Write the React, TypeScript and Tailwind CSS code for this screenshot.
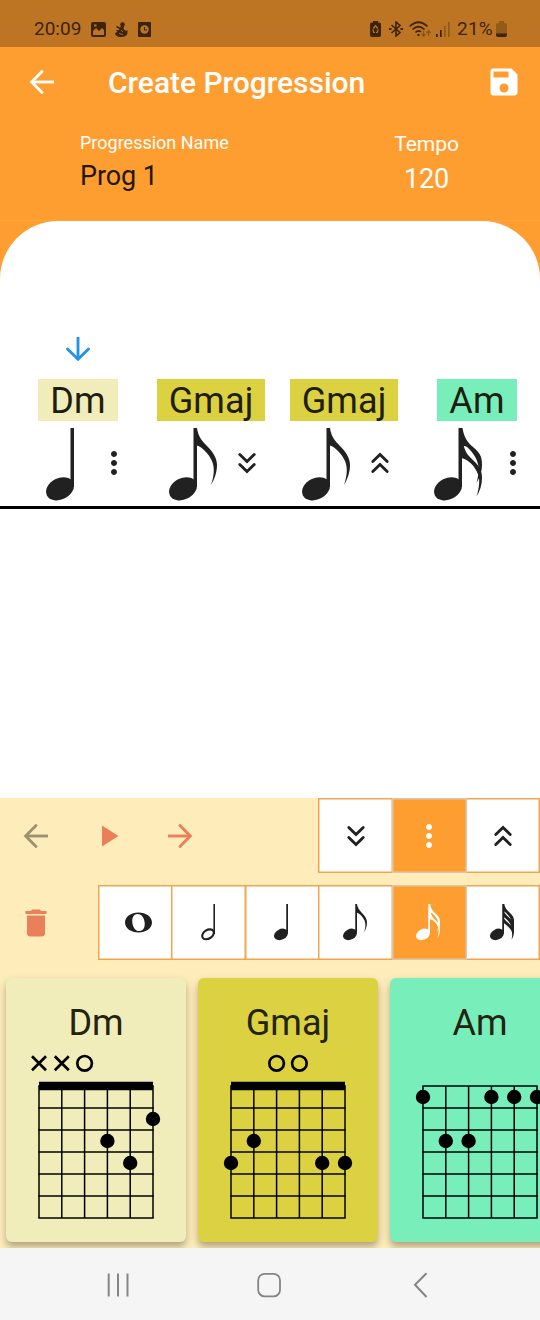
import React from "react";
import { MdDelete, MdMoreVert, MdPlayArrow, MdSave } from "react-icons/md";

type NoteKind = "whole" | "half" | "quarter" | "eighth" | "sixteenth" | "thirtySecond";
type StrumKind = "down" | "none" | "up";

const FLAG = "M28 0C29 8 33 13 38 18C44 24 48 30 48 37C48 45 45 52 42 57C45 48 46 40 43 33C40 26 33 19 28 17.5Z";
const FLAG_UPPER = "M27 0H28.5C29.5 6 31 10 34 14C37 18 41 20 44 24C47.5 28 48 32 48 37C48 43 46 49 42.5 55C44 49 45 44 44.500 39C44 33 40 26 36.500 22.500C33.500 19 32 18 30 18L27 19Z";
const FLAG_LOWER = "M27 14L29.500 17C30.500 21 32 24.500 34 27C38 31.500 41 33.500 44 37.500C47 42 48 45 48 50C48 57 46 63 42.5 68.5C45 61 46 53 44.500 47.500C42.500 42 40 38.500 37.500 36C34 32.500 31 31 27 30Z";

function Note({ kind, scale = 1, className = "" }: { kind: NoteKind; scale?: number; className?: string }) {
  if (kind === "whole") {
    return (
      <svg width="27" height="21" viewBox="0 0 27 22" preserveAspectRatio="none" fill="currentColor" className={className}>
        <path
          fillRule="evenodd"
          d="M13.5 .5C21 .5 27 5 27 11S21 21.5 13.5 21.5S0 17 0 11S6 .5 13.5 .5ZM12.4 2C8.5 2.3 7 6 7.3 10.5C7.6 16 10.5 20.3 14.6 20C18.5 19.7 20 16 19.7 11.5C19.4 6 16.5 1.7 12.4 2Z"
        />
      </svg>
    );
  }
  const wide = kind !== "quarter" && kind !== "half";
  const width = wide ? 48.5 : 28;
  return (
    <svg
      width={width * scale}
      height={73 * scale}
      viewBox={`0 0 ${width} 73`}
      fill="currentColor"
      className={`overflow-visible ${className}`}
    >
      {kind === "half" ? (
        <>
          <path d="M24.8 0H28V60H24.8Z" />
          <ellipse cx="14" cy="60.7" rx="12.6" ry="8.6" transform="rotate(-32 14 60.7)" fill="none" stroke="currentColor" strokeWidth="4.2" />
        </>
      ) : (
        <>
          <path d="M24.5 0H28V59H24.5Z" />
          <ellipse cx="14" cy="60.8" rx="14.7" ry="10.6" transform="rotate(-27 14 60.8)" />
        </>
      )}
      {kind === "eighth" && <path d={FLAG} />}
      {kind === "sixteenth" && (
        <>
          <path d={FLAG_UPPER} />
          <path d={FLAG_LOWER} />
        </>
      )}
      {kind === "thirtySecond" && (
        <>
          <path d="M27 0H28.5C30 7 33 11 38 16C44 21 48 26 48 33V45H45C45 32 36 19 28 15Z" />
          <path d="M27 14C30 20 35 24 40 29C45 34 48 38 48 45V57H45C45 43 36 31 27 26Z" />
          <path d="M27 27C30 33 35 36 40 41C45 45 48 49 48 55C48 62 46 67 43 71C45 63 45 57 42 52C38 46 32 41 27 38Z" />
        </>
      )}
    </svg>
  );
}

function Strum({ kind }: { kind: StrumKind }) {
  if (kind === "none") return <MdMoreVert size={36} />;
  return (
    <svg
      width="36"
      height="36"
      viewBox="0 0 24 24"
      fill="none"
      stroke="currentColor"
      strokeWidth="1.9"
      strokeLinecap="round"
      className={kind === "up" ? "rotate-180" : ""}
    >
      <path d="M7.2 6.3L12 11L16.8 6.3M7.2 13L12 17.7L16.8 13" />
    </svg>
  );
}

function Arrow({ className = "" }: { className?: string }) {
  return (
    <svg width="36" height="36" viewBox="0 0 24 24" fill="none" stroke="currentColor" strokeWidth="1.9" className={className}>
      <path d="M20 12H6" />
      <path d="M12 5L5.1 12L12 19" strokeLinecap="round" />
    </svg>
  );
}

function StatusBar() {
  return (
    <div className="flex h-[47px] items-start bg-[#bd7524] pt-[17px] text-[19px] leading-[24px] text-[#3c2409]">
      <div className="flex w-full items-center pr-[33px] pl-[34px]">
        <span className="w-[57px]">20:09</span>
        <svg width="15" height="15" viewBox="0 0 15 15" className="mr-[9px]">
          <path fillRule="evenodd" fill="currentColor" d="M2 0H13Q15 0 15 2V13Q15 15 13 15H2Q0 15 0 13V2Q0 0 2 0ZM2 9L5 6L8 9L11 6L13 8V13H2ZM3 2.5V4.5H5.5V2.5Z" />
        </svg>
        <svg width="13" height="15" viewBox="0 0 13 15" fill="currentColor" className="mr-[10px]">
          <circle cx="7.5" cy="2.5" r="2.3" />
          <path d="M6 4H9L8.5 7L11 9L12.5 8V11C12 14 9 15 6 15C3 15 0 13.5 0 11L2.5 10L1 8L4 8Z" />
          <path d="M1.5 4.5L5 6.5" stroke="currentColor" strokeWidth="1.5" />
          <path d="M4 11.5L8 12.5M6 8L8 10" stroke="#bd7524" strokeWidth=".8" />
        </svg>
        <svg width="13" height="15" viewBox="0 0 13 15">
          <rect width="13" height="15" rx=".8" fill="currentColor" />
          <circle cx="6.5" cy="7.5" r="4.2" fill="#bd7524" />
          <path d="M6.5 5V8H9" fill="none" stroke="currentColor" strokeWidth="1.2" />
        </svg>
        <svg width="11" height="16" viewBox="0 0 11 16" className="mr-[8px] ml-auto">
          <path d="M3 0H8V1.5H9.5Q11 1.5 11 3V14Q11 16 9 16H2Q0 16 0 14V3Q0 1.5 1.5 1.5H3Z" fill="currentColor" />
          <path d="M3.3 7.5L5.5 4.8L7.7 7.5M2.8 8.5L3.8 11.5H5M8.2 8.5L7.2 11.5H6" fill="none" stroke="#bd7524" strokeWidth="1.2" />
        </svg>
        <svg width="14" height="16" viewBox="0 0 14 16" fill="none" stroke="currentColor" strokeWidth="1.6" className="mr-[6px]">
          <path d="M2.5 4L11 11.5L7 15V1L11 4.5L2.5 12" />
          <path d="M0 8H2.5M11.5 8H14" strokeWidth="2" />
        </svg>
        <svg width="23" height="17" viewBox="0 0 23 17" fill="none" stroke="currentColor" strokeWidth="1.7" className="mr-[4px]">
          <path d="M.6 5.5Q9.5-3 18.5 5.5M3.5 8.5Q9.5 2.8 15.5 8.5M6.5 11.5Q9.5 8.5 12 11" />
          <circle cx="9.5" cy="14" r="1.2" fill="currentColor" stroke="none" />
          <path d="M14.5 10V15M12.5 13L14.5 15.2L16.5 13M19.5 15V10M17.5 12L19.5 9.8L21.5 12" opacity=".4" strokeWidth="1.3" />
        </svg>
        <svg width="15" height="15" viewBox="0 0 15 15" fill="currentColor" className="mr-[6px]">
          <path d="M0 12H1.7V15H0ZM4 8H5.7V15H4Z" />
          <path d="M8 4H9.7V15H8ZM12 0H13.7V15H12Z" opacity=".35" />
        </svg>
        <span className="w-[39px] tracking-[0.2px]">21%</span>
        <svg width="11" height="16" viewBox="0 0 11 16">
          <path d="M3 0H8V2H9Q11 2 11 4V13H0V4Q0 2 2 2H3Z" fill="#875116" opacity=".75" />
          <path d="M0 12.5H11V14Q11 16 9 16H2Q0 16 0 14Z" fill="currentColor" />
        </svg>
      </div>
    </div>
  );
}

function Header() {
  return (
    <header className="h-[173px] text-white">
      <div className="flex h-[70px] items-center pr-[18px] pl-[24px]">
        <Arrow />
        <h1 className="ml-[48px] flex-1 pt-px text-[30px] leading-[36px] font-medium tracking-[-0.03px]">Create Progression</h1>
        <MdSave size={36} />
      </div>
      <div className="flex justify-between pr-[81px] pl-[80px]">
        <div className="pt-[16px]">
          <div className="text-[18px] leading-[20px]">Progression Name</div>
          <div className="mt-[7px] text-[27px] leading-[32px] tracking-[-0.1px] text-[#231604]">Prog 1</div>
        </div>
        <div className="pt-[15px] text-center">
          <div className="text-[21px] leading-[24px]">Tempo</div>
          <div className="mt-[7px] text-[27px] leading-[32px] tracking-[-0.2px]">120</div>
        </div>
      </div>
    </header>
  );
}

const beats: { chord: string; color: string; note: NoteKind; nudge: string; strum: StrumKind }[] = [
  { chord: "Dm", color: "bg-[#f0edbb]", note: "quarter", nudge: "mr-[1px]", strum: "none" },
  { chord: "Gmaj", color: "bg-[#dbd141]", note: "eighth", nudge: "", strum: "down" },
  { chord: "Gmaj", color: "bg-[#dbd141]", note: "eighth", nudge: "", strum: "up" },
  { chord: "Am", color: "bg-[#78efbb]", note: "sixteenth", nudge: "mr-[2px]", strum: "none" },
];

function Staff() {
  return (
    <main className="h-[577px] overflow-hidden rounded-t-[58px] bg-white pt-[110px]">
      <div className="flex h-[48.4px] items-start pl-[60px] text-[#2391ea]">
        <Arrow className="-rotate-90" />
      </div>
      <div className="flex border-b-[3px] border-black pb-[4.6px] pl-[11.5px] text-[#212121]">
        {beats.map((beat, i) => (
          <div key={i} className="flex w-[133px] shrink-0 flex-col items-center">
            <div className={`h-[42px] px-[12px] text-[36px] leading-[44px] tracking-[0.1px] text-[#1e1d10] ${beat.color}`}>
              {beat.chord}
            </div>
            <div className="mt-[6.2px] flex h-[73.5px]">
              <div className="flex w-[72px] justify-center">
                <Note kind={beat.note} className={beat.nudge} />
              </div>
              <div className="flex w-[36px] justify-center pt-[17.3px]">
                <Strum kind={beat.strum} />
              </div>
            </div>
          </div>
        ))}
      </div>
    </main>
  );
}

function Toggle({ selected, children }: { selected?: boolean; children: React.ReactNode }) {
  return (
    <button
      className={`-ml-[1.5px] flex h-[75px] w-[75px] shrink-0 items-center justify-center ${
        selected
          ? "z-10 bg-[#ff9e30] text-white shadow-[inset_0_0_0_1.5px_#dcc7ad]"
          : "bg-white text-[#202020] shadow-[inset_0_0_0_1.5px_#f3a54c]"
      }`}
    >
      {children}
    </button>
  );
}

const strums: StrumKind[] = ["down", "none", "up"];
const notes: { kind: NoteKind; nudge: string }[] = [
  { kind: "whole", nudge: "ml-[6px]" },
  { kind: "half", nudge: "mr-[2px]" },
  { kind: "quarter", nudge: "mr-[2px]" },
  { kind: "eighth", nudge: "" },
  { kind: "sixteenth", nudge: "mr-[2px]" },
  { kind: "thirtySecond", nudge: "mr-[1px]" },
];

const chords: { name: string; color: string; marks: string; nut: boolean; dots: [number, number][] }[] = [
  { name: "Dm", color: "bg-[#f0edbb]", marks: "xxo---", nut: true, dots: [[3, 2], [4, 3], [5, 1]] },
  { name: "Gmaj", color: "bg-[#dbd141]", marks: "--oo--", nut: true, dots: [[0, 3], [1, 2], [4, 3], [5, 3]] },
  { name: "Am", color: "bg-[#78efbb]", marks: "------", nut: false, dots: [[0, 0], [1, 2], [2, 2], [3, 0], [4, 0], [5, 0]] },
];

const stringX = (i: number) => 33 + 22.8 * i;
const fretY = (i: number) => 38 + 22 * i;

function ChordCard({ chord }: { chord: (typeof chords)[number] }) {
  return (
    <div className={`h-[264px] w-[180px] shrink-0 rounded-[6px] pt-[24px] shadow-[0_5px_6px_-1px_rgba(0,0,0,0.22),0_4px_10px_1px_rgba(0,0,0,0.12)] ${chord.color}`}>
      <div className="text-center text-[36px] leading-[43px] text-[#24230f]">{chord.name}</div>
      <svg width="180" height="180" viewBox="0 0 180 180" fill="none" stroke="#000" className="mt-[3px] block">
        {chord.marks.split("").map((mark, i) =>
          mark === "x" ? (
            <path key={i} d={`M${stringX(i) - 7} 8.3l14 14m0 -14l-14 14`} strokeWidth="2.7" />
          ) : mark === "o" ? (
            <circle key={i} cx={stringX(i)} cy="15.3" r="7.3" strokeWidth="2.7" />
          ) : null
        )}
        <g strokeWidth="1.5">
          {[0, 1, 2, 3, 4, 5].map((i) => (
            <path key={i} d={`M${stringX(i)} 38V170`} />
          ))}
          {[0, 1, 2, 3, 4, 5, 6].map((i) => (
            <path key={i} d={`M32.3 ${fretY(i)}H147.7`} />
          ))}
        </g>
        {chord.nut && <path d="M33 38H147" strokeWidth="8.5" />}
        <g fill="#000" stroke="none">
          {chord.dots.map(([s, f]) => (
            <circle key={s} cx={stringX(s)} cy={fretY(f) + 11} r="7.2" />
          ))}
        </g>
      </svg>
    </div>
  );
}

function Editor() {
  return (
    <section className="h-[450px] overflow-hidden bg-[#feecba]">
      <div className="flex">
        <div className="flex h-[75px] w-[319.5px] shrink-0 items-center text-[#e98059]">
          <div className="flex w-[72px] justify-center text-[#9e916f]"><Arrow /></div>
          <div className="flex w-[72px] justify-center"><MdPlayArrow size={36} /></div>
          <div className="flex w-[72px] justify-center"><Arrow className="rotate-180" /></div>
        </div>
        {strums.map((kind) => (
          <Toggle key={kind} selected={kind === "none"}><Strum kind={kind} /></Toggle>
        ))}
      </div>
      <div className="mt-[12px] flex">
        <div className="flex h-[75px] w-[99px] shrink-0 items-center pl-[18px] text-[#e98059]">
          <MdDelete size={36} />
        </div>
        {notes.map(({ kind, nudge }) => (
          <Toggle key={kind} selected={kind === "sixteenth"}><Note kind={kind} scale={0.5} className={nudge} /></Toggle>
        ))}
      </div>
      <div className="mt-[18px] flex gap-[12px] pl-[6px]">
        {chords.map((chord) => (
          <ChordCard key={chord.name} chord={chord} />
        ))}
      </div>
    </section>
  );
}

function NavigationBar() {
  return (
    <nav className="flex h-[72px] items-center bg-[#f5f5f5] pt-px text-[#858585]">
      <svg width="24" height="24" viewBox="0 0 24 24" fill="none" stroke="currentColor" strokeWidth="2" className="ml-[106px]">
        <path d="M2.7 .5V23.5M12 .5V23.5M21.5 .5V23.5" />
      </svg>
      <svg width="24" height="26" viewBox="0 0 24 26" fill="none" stroke="currentColor" strokeWidth="1.8" className="ml-[127px]">
        <rect x="1.2" y="1.8" width="21.8" height="22.6" rx="6.5" />
      </svg>
      <svg width="16" height="26" viewBox="0 0 16 26" fill="none" stroke="currentColor" strokeWidth="2" className="ml-[132px]">
        <path d="M13.5 1.3L2 12.8L13.5 25" />
      </svg>
    </nav>
  );
}

export default function App() {
  return (
    <div className="flex h-[1320px] w-[540px] flex-col overflow-hidden bg-[#ff9e30] font-['Roboto',sans-serif]">
      <StatusBar />
      <Header />
      <div className="h-px shrink-0 bg-[#ffa439]" />
      <Staff />
      <Editor />
      <NavigationBar />
    </div>
  );
}
